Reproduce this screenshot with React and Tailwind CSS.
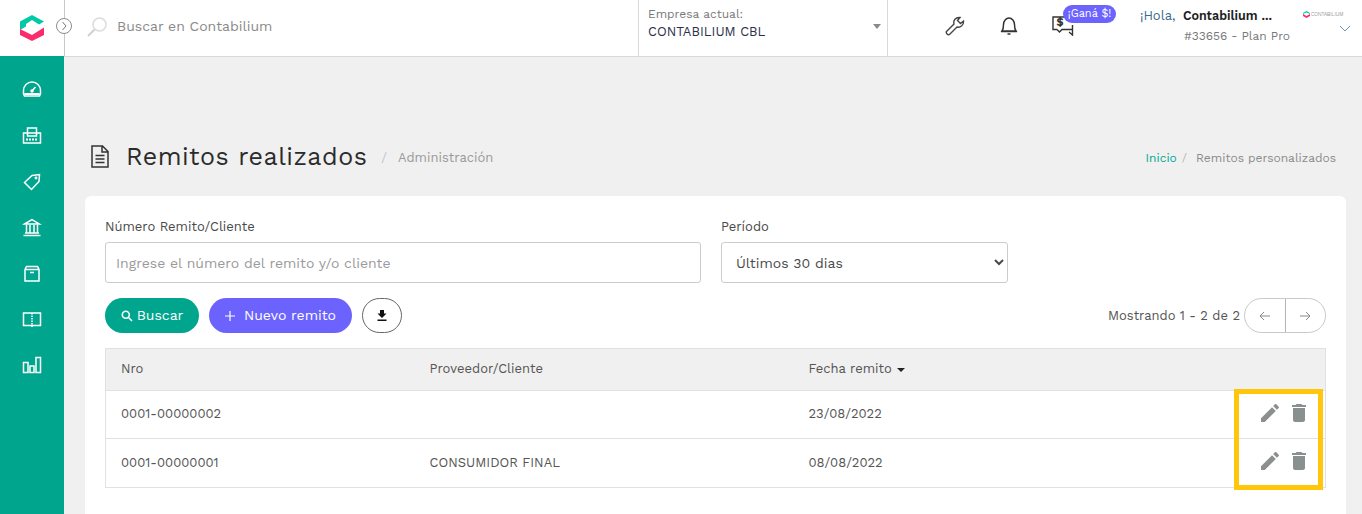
import React from 'react';

const font = { fontFamily: '"Work Sans", Inter, "Open Sans", sans-serif' };

function SideIcon({ children }) {
  return (
    <div className="h-[46px] flex items-center justify-center">
      <svg width="20" height="20" viewBox="0 0 20 20" fill="none" stroke="white" strokeWidth="1.5">
        {children}
      </svg>
    </div>
  );
}

function Sidebar() {
  return (
    <aside className="relative -mt-px w-16 shrink-0 bg-[#00a58e] pt-[11px]">
      {/* gauge */}
      <SideIcon>
        <path d="M2.500 16 Q1 13.500 1.500 10.500 A8.500 8.500 0 0 1 18.500 10.500 Q19 13.500 17.500 16 Z" />
        <path d="M2.500 14 H17.500" strokeWidth="2" />
        <path d="M10 11 L13.500 7" />
        <circle cx="10" cy="11" r="1" />
      </SideIcon>
      {/* printer */}
      <SideIcon>
        <path d="M5.500 7 V2 H14.500 V7" />
        <rect x="1.500" y="7" width="17" height="10" />
        <path d="M4 13.500 H16" strokeDasharray="2 1" strokeWidth="2" />
        <path d="M5.500 7 V10 H14.500 V7" />
      </SideIcon>
      {/* tag */}
      <SideIcon>
        <path d="M2.500 10.500 L10 3.500 L17.500 2.500 L17 9.500 L9.500 17.500 Z" />
        <circle cx="14" cy="6" r="0.700" />
      </SideIcon>
      {/* bank */}
      <SideIcon>
        <path d="M2.500 6 L10 1.500 L17.500 6 Z" />
        <path d="M4.500 7 V14.500 M8 7 V14.500 M12 7 V14.500 M15.500 7 V14.500 M3 15 H17 M1.500 17.500 H18.500" />
      </SideIcon>
      {/* box */}
      <SideIcon>
        <path d="M3 5.500 L4.500 2.500 H15.500 L17 5.500 V17 H3 Z M3 5.500 H17 M8 8.500 H12" />
      </SideIcon>
      {/* book */}
      <SideIcon>
        <path d="M10 3 H1.500 V15.500 H18.500 V3 H10" />
        <path d="M10 3 V18" strokeDasharray="1.500 1" />
      </SideIcon>
      {/* bars */}
      <SideIcon>
        <path d="M1.500 6.500 H6 V16.500 H1.500 Z M8 10 H12 V16.500 H8 Z M14 1.500 H18.500 V16.500 H14 Z" />
      </SideIcon>
    </aside>
  );
}

function Logo() {
  return (
    <svg width="24" height="26" viewBox="0 0 24 26" className="ml-5">
      <path d="M12 0 L24 6.500 L19 9.500 L12 5 L6 9 V11.500 L0 15 V6.500 Z" fill="#00c9a7" />
      <path d="M0 14 L12 20 L24 12.500 V20 L12 26 L0 20 Z" fill="#fb2c6c" />
    </svg>
  );
}

function Header() {
  return (
    <header className="relative h-[57px] shrink-0 bg-white border-b border-[#d9d9d9] flex items-stretch">
      <div className="w-[65px] shrink-0 border-r border-[#c9c9c9] flex items-center">
        <Logo />
      </div>
      {/* sidebar toggle */}
      <div className="absolute left-[56px] top-[18px] w-4 h-4 rounded-full border border-[#8c8c8c] bg-white flex items-center justify-center">
        <svg width="8" height="10" viewBox="0 0 8 10" fill="none" stroke="#777" strokeWidth="1">
          <path d="M2.500 1 L6 5 L2.500 9" />
        </svg>
      </div>
      <div className="w-[573px] shrink-0 flex items-center pl-[22px] pb-[3px]">
        <svg width="20" height="20" viewBox="0 0 20 20" fill="none" className="mr-[10px]">
          <circle cx="12.500" cy="7.500" r="6.500" stroke="#dcdcdc" strokeWidth="1.500" />
          <path d="M7.500 12.500 L1 19" stroke="#d0d0d0" strokeWidth="2" />
        </svg>
        <span className="text-[14px] text-[#8a8a8a]">Buscar en Contabilium</span>
      </div>
      <div className="w-[250px] shrink-0 border-x border-[#d9d9d9] relative pl-[9px] pt-[6px] leading-[17px]">
        <div className="text-[12px] text-[#77787b]">Empresa actual:</div>
        <div className="text-[13px] text-[#2c3048]">CONTABILIUM CBL</div>
        <div className="absolute right-[6px] top-[24px] w-0 h-0 border-x-[4px] border-x-transparent border-t-[5px] border-t-[#8a8a8a]" />
      </div>
      <div className="w-[252px] shrink-0 flex items-center relative">
        {/* wrench */}
        <svg width="20" height="20" viewBox="0 0 20 20" fill="none" stroke="#444" strokeWidth="1.400" className="absolute left-[57px] top-[16px]">
          <path d="M1.500 15.500 L9 8 C8 4.500 10.500 1 15 1.500 L12.500 4.500 L15.500 7.500 L18.500 5 C19 9.500 15 12 12 11 L4.500 18.500 C3 19.500 0.500 17 1.500 15.500 Z" />
        </svg>
        {/* bell */}
        <svg width="18" height="20" viewBox="0 0 18 20" fill="none" stroke="#333" strokeWidth="1.500" className="absolute left-[112px] top-[16px]">
          <path d="M2 15 C3.500 13 3.500 11.500 3.500 8.500 C3.500 5 6 2 9 2 C12 2 14.500 5 14.500 8.500 C14.500 11.500 14.500 13 16 15 Z M1 15.500 H17 M7.500 18 H10.500" />
        </svg>
        {/* chat with dollar */}
        <svg width="22" height="20" viewBox="0 0 22 20" fill="none" stroke="#333" strokeWidth="1.400" className="absolute left-[164px] top-[16px]">
          <path d="M5 13.500 H1 V1 H13 M5 13.500 L7.500 16 L10 13.500 H15" />
          <path d="M15 13.500 H20.500 V9 M20.500 13.500 V19 L17 16" />
          <text x="4.500" y="10" fontSize="11" fontWeight="700" fill="#333" stroke="none">$</text>
        </svg>
        <div className="absolute left-[175px] top-[5px] h-[18px] w-[53px] rounded-full bg-[#6c63ff] text-white text-[11px] leading-[18px] text-center">¡Ganá $!</div>
      </div>
      <div className="flex-1 relative">
        <div className="absolute left-0 top-[7px] text-[13px] leading-[18px] whitespace-nowrap text-[#3b6b8c]">
          ¡Hola, <span className="ml-[3px] text-[12.500px] font-semibold text-[#1d1d1f]">Contabilium ...</span>
        </div>
        <div className="absolute left-[44px] top-[27px] text-[12px] leading-[18px] whitespace-nowrap text-[#77787b]">#33656 - Plan Pro</div>
        <div className="absolute left-[163px] top-[11px] flex items-center gap-[1px]">
          <svg width="7" height="7" viewBox="0 0 7 7">
            <path d="M3.500 0 L7 2 V3 L3.500 1.500 L0 3 V2 Z" fill="#00c9a7" />
            <path d="M0 3 L3.500 5 L7 3 V5 L3.500 7 L0 5 Z" fill="#fb2c6c" />
          </svg>
          <span className="text-[5px] leading-[7px] font-light text-[#555]">CONTABILIUM</span>
        </div>
        <svg width="12" height="7" viewBox="0 0 12 7" fill="none" stroke="#6f94b3" strokeWidth="1" className="absolute left-[199px] top-[25px]">
          <path d="M1 1 L6 6 L11 1" />
        </svg>
      </div>
    </header>
  );
}

function ActionIcons() {
  return (
    <div className="flex justify-end gap-[5px] pr-[14px] pb-[4px]">
      <svg width="24" height="24" viewBox="0 0 24 24" fill="#8a8f8f">
        <path d="M3 17.250V21h3.750L17.810 9.940l-3.750-3.750L3 17.250zM20.710 7.040c.39-.39.39-1.020 0-1.410l-2.340-2.340c-.39-.39-1.020-.39-1.410 0l-1.830 1.830 3.750 3.750 1.830-1.830z" />
      </svg>
      <svg width="24" height="24" viewBox="0 0 24 24" fill="#8a8f8f">
        <path d="M6 19c0 1.100.9 2 2 2h8c1.100 0 2-.9 2-2V7H6v12zM19 4h-3.500l-1-1h-5l-1 1H5v2h14V4z" />
      </svg>
    </div>
  );
}

const rows = [
  { nro: '0001-00000002', cliente: '', fecha: '23/08/2022' },
  { nro: '0001-00000001', cliente: 'CONSUMIDOR FINAL', fecha: '08/08/2022' },
];

function RemitosTable() {
  return (
    <div className="relative mt-[15px]">
      <table className="w-full table-fixed border-collapse text-[13px] text-[#555]">
        <colgroup>
          <col className="w-[308px]" />
          <col className="w-[379px]" />
          <col className="w-[300px]" />
          <col />
        </colgroup>
        <thead>
          <tr className="h-[42px] bg-[#f0f0f0] border border-[#dee2e6]">
            <th className="pl-[15px] pb-[2px] text-left font-normal">Nro</th>
            <th className="pl-[16px] pb-[2px] text-left font-normal">Proveedor/Cliente</th>
            <th className="pl-[16px] pb-[2px] text-left font-normal">
              Fecha remito
              <span className="inline-block ml-[5px] align-middle w-0 h-0 border-x-[4px] border-x-transparent border-t-[4px] border-t-[#222]" />
            </th>
            <th />
          </tr>
        </thead>
        <tbody>
          {rows.map((r, i) => (
            <tr key={r.nro} className={`border border-[#dee2e6] ${i === 0 ? 'h-[48px]' : 'h-[49px]'}`}>
              <td className={`pl-[15px] ${i === 0 ? 'pb-[2px]' : ''}`}>{r.nro}</td>
              <td className="pl-[16px]">{r.cliente}</td>
              <td className={`pl-[16px] ${i === 0 ? 'pb-[2px]' : ''}`}>{r.fecha}</td>
              <td><ActionIcons /></td>
            </tr>
          ))}
        </tbody>
      </table>
      {/* yellow highlight */}
      <div className="absolute left-[1129px] top-[41px] w-[89px] h-[101px] border-[5px] border-[#ffc60b] pointer-events-none" />
    </div>
  );
}

function Filters() {
  return (
    <div className="flex gap-5">
      <div className="w-[596px]">
        <label className="block text-[13px] leading-[20px] text-[#4a4a4a] mb-[5px]">Número Remito/Cliente</label>
        <input
          placeholder="Ingrese el número del remito y/o cliente"
          className="w-full h-[41px] px-[10px] border border-[#ccc] rounded-[3px] text-[14px] text-[#4a4a4a] placeholder:text-[#9a9a9a] bg-white"
        />
      </div>
      <div className="w-[287px]">
        <label className="block text-[13px] leading-[20px] text-[#4a4a4a] mb-[5px]">Período</label>
        <select className="w-full h-[41px] pl-[10px] pr-[8px] border border-[#ccc] rounded-[3px] text-[14px] text-[#4a4a4a] bg-white appearance-auto">
          <option>Últimos 30 dias</option>
        </select>
      </div>
    </div>
  );
}

function Toolbar() {
  return (
    <div className="mt-[15px] flex items-center h-[35px]">
      <button className="w-[94px] h-[35px] rounded-full bg-[#00a58e] text-white text-[14px] flex items-center justify-center gap-[4px]">
        <svg width="12" height="12" viewBox="0 0 12 12" fill="none" stroke="white" strokeWidth="1.600">
          <circle cx="4.800" cy="4.800" r="3.500" />
          <path d="M7.500 7.500 L11 11" />
        </svg>
        Buscar
      </button>
      <button className="ml-[10px] w-[143px] h-[35px] rounded-full bg-[#6c63ff] text-white text-[14px] flex items-center justify-center gap-[9px]">
        <svg width="10" height="10" viewBox="0 0 10 10" fill="none" stroke="white" strokeWidth="1.200">
          <path d="M5 0 V10 M0 5 H10" />
        </svg>
        Nuevo remito
      </button>
      <button className="ml-[10px] w-10 h-[35px] rounded-full border border-[#666] bg-white flex items-center justify-center">
        <svg width="10" height="11" viewBox="0 0 10 11" fill="#111">
          <path d="M3 0 H7 V3.500 H9.500 L5 8 L0.500 3.500 H3 Z M0.500 9.500 H9.500 V11 H0.500 Z" />
        </svg>
      </button>
      <span className="ml-auto text-[13px] text-[#555] mr-[4px]">Mostrando 1 - 2 de 2</span>
      <div className="w-[82px] h-[35px] rounded-full border border-[#c9c9c9] flex">
        <div className="flex-1 border-r border-[#b5b5b5] flex items-center justify-center">
          <svg width="11" height="10" viewBox="0 0 11 10" fill="none" stroke="#888" strokeWidth="1">
            <path d="M11 5 H1 M5 1 L1 5 L5 9" />
          </svg>
        </div>
        <div className="flex-1 flex items-center justify-center">
          <svg width="11" height="10" viewBox="0 0 11 10" fill="none" stroke="#888" strokeWidth="1">
            <path d="M0 5 H10 M6 1 L10 5 L6 9" />
          </svg>
        </div>
      </div>
    </div>
  );
}

export default function App() {
  return (
    <div style={font} className="h-[514px] w-full overflow-hidden flex flex-col bg-[#f0f0f0]">
      <Header />
      <div className="flex flex-1 min-h-0">
        <Sidebar />
        <main className="flex-1 min-w-0 pl-[21px] pr-4">
          <div className="h-[139px] flex items-end pb-[24px]">
            <svg width="18" height="23" viewBox="0 0 18 23" fill="none" stroke="#333" strokeWidth="1.500" className="ml-[6px] mb-[4px]">
              <path d="M1 1 H11.500 L17 6.500 V22 H1 Z M11 1 V7 H17 M4.500 10.500 H13.500 M4.500 14 H13.500 M4.500 17.500 H13.500" />
            </svg>
            <h1 className="ml-[17px] text-[25px] leading-[30px] text-[#2b2b2b] tracking-[0.5px]">Remitos realizados</h1>
            <span className="ml-[14px] mb-[5px] text-[13px] text-[#c4c4c4]">/</span>
            <span className="ml-[11px] mb-[5px] text-[13px] text-[#9a9a9a]">Administración</span>
            <span className="ml-auto mb-[5px] text-[12px] text-[#00a58e]">Inicio</span>
            <span className="ml-[5px] mb-[5px] text-[12px] text-[#b5b5b5]">/</span>
            <span className="ml-[9px] mb-[5px] mr-[10px] text-[12px] text-[#8a8a8a]">Remitos personalizados</span>
          </div>
          <section className="bg-white rounded-t-[6px] h-[330px] px-5 pt-[21px]">
            <Filters />
            <Toolbar />
            <RemitosTable />
          </section>
        </main>
      </div>
    </div>
  );
}
